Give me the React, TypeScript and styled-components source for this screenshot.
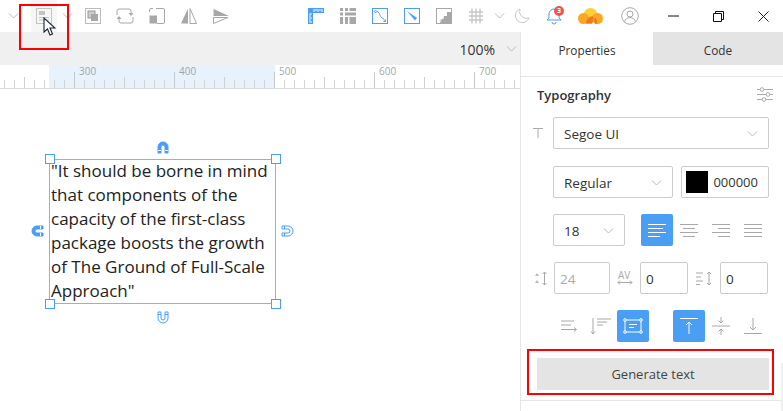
import React from 'react'
import styled, { createGlobalStyle } from 'styled-components'

const GlobalStyle = createGlobalStyle`
  html, body { margin: 0; padding: 0; background: #fff; }
  body { font-family: "Open Sans", "Noto Sans", sans-serif; overflow: hidden; }
`

const BLUE = '#4a9ff5'
const GREY = '#a8a8a8'

const Window = styled.div`
  position: relative;
  width: 783px;
  height: 411px;
  overflow: hidden;
  display: flex;
  flex-direction: column;
`
const TitleBar = styled.div`
  height: 32px;
  display: flex;
  align-items: center;
  flex: none;
`
const Slot = styled.div<{ $w?: number; $ml?: number; $hover?: boolean }>`
  width: ${p => p.$w ?? 32}px;
  margin-left: ${p => p.$ml ?? 0}px;
  height: 32px;
  flex: none;
  display: flex;
  align-items: center;
  justify-content: center;
  position: relative;
  background: ${p => (p.$hover ? '#f6f6f6' : 'transparent')};
  svg { overflow: visible; }
`
const Badge = styled.span`
  position: absolute;
  left: 16px;
  top: 6px;
  width: 10px;
  height: 10px;
  border-radius: 50%;
  background: #ef5350;
  color: #fff;
  font-size: 7px;
  font-weight: 700;
  line-height: 10px;
  text-align: center;
`
const Body = styled.div`
  flex: 1;
  display: flex;
  min-height: 0;
`
const Canvas = styled.div`
  width: 520px;
  flex: none;
  display: flex;
  flex-direction: column;
`
const ZoomBar = styled.div`
  height: 33px;
  flex: none;
  background: #f0f0f0;
  display: flex;
  align-items: center;
  justify-content: flex-end;
  font-size: 14px;
  color: #333;
  gap: 11px;
  padding-right: 4px;
  span { padding-top: 2px; }
`
const Ruler = styled.div`
  position: relative;
  height: 24px;
  flex: none;
  display: flex;
  overflow: hidden;
  box-sizing: border-box;
  border-bottom: 1px solid #dcdcdc;
`
const RulerShade = styled.div`
  position: absolute;
  left: 49px;
  top: 0;
  bottom: 0;
  width: 226px;
  background: #e8f2fc;
`
const RulerSegment = styled.div<{ $first?: boolean }>`
  position: relative;
  width: 100px;
  flex: none;
  margin-left: ${p => (p.$first ? -26 : 0)}px;
  font-size: 10px;
  line-height: 11px;
  color: #a4a4a4;
  padding: 1px 0 0 5px;
  box-sizing: border-box;
  &::before {
    content: '';
    position: absolute;
    left: 0;
    bottom: 0;
    width: 100%;
    height: 16px;
    background:
      linear-gradient(#c8c8c8, #c8c8c8) 0 100% / 1px 16px no-repeat,
      linear-gradient(#d0d0d0, #d0d0d0) 50px 100% / 1px 11px no-repeat,
      repeating-linear-gradient(90deg, #d4d4d4 0 1px, transparent 1px 10px) 0 100% / 100% 8px no-repeat;
  }
`
const Stage = styled.div`
  flex: 1;
  display: flex;
  padding: 70px 0 0 49px;
`
const TextBox = styled.div`
  position: relative;
  width: 227px;
  height: 145px;
  box-sizing: border-box;
  border: 1px solid #7db8f5;
  padding-left: 1px;
  font-size: 17px;
  line-height: 24px;
  color: #222;
  white-space: nowrap;
`
const BoxText = styled.div`
  margin-top: -1px;
`
const Handle = styled.span<{ $x: 'left' | 'right'; $y: 'top' | 'bottom' }>`
  position: absolute;
  ${p => p.$x}: ${p => (p.$x === 'left' ? -5 : -6)}px;
  ${p => p.$y}: -6px;
  width: 8px;
  height: 8px;
  border: 1px solid ${BLUE};
  background: #fff;
`
const Magnet = styled.span<{ $x: number; $y: number }>`
  position: absolute;
  left: ${p => p.$x}px;
  top: ${p => p.$y}px;
  width: 14px;
  height: 14px;
  line-height: 0;
`
const Panel = styled.div`
  flex: 1;
  border-left: 1px solid #e6e6e6;
  display: flex;
  flex-direction: column;
`
const Tabs = styled.div`
  display: flex;
  height: 33px;
  flex: none;
`
const Tab = styled.div<{ $active?: boolean }>`
  width: ${p => (p.$active ? 132 : 130)}px;
  background: ${p => (p.$active ? '#fff' : '#e4e4e4')};
  font-size: 11.8px;
  font-weight: 500;
  color: #333;
  padding-top: 2px;
  box-sizing: border-box;
  display: flex;
  align-items: center;
  justify-content: center;
`
const Section = styled.div`
  margin-top: 11px;
  border-top: 1px solid #e6e6e6;
  border-bottom: 1px solid #e6e6e6;
  padding: 0 14px 0 16px;
  box-sizing: border-box;
  height: 325px;
`
const SectionHead = styled.div`
  height: 40px;
  box-sizing: border-box;
  padding-bottom: 5px;
  margin-right: -4px;
  display: flex;
  align-items: center;
  justify-content: space-between;
  font-size: 13px;
  font-weight: 600;
  color: #333;
`
const Row = styled.div<{ $mb: number; $pl?: number }>`
  display: flex;
  align-items: center;
  margin-bottom: ${p => p.$mb}px;
  padding-left: ${p => p.$pl ?? 16}px;
`
const Field = styled.div<{ $w: number; $ml?: number; $dim?: boolean; $tight?: boolean }>`
  width: ${p => p.$w}px;
  height: 32px;
  margin-left: ${p => p.$ml ?? 0}px;
  flex: none;
  box-sizing: border-box;
  border: 1px solid #ccc;
  border-radius: 2px;
  display: flex;
  align-items: center;
  justify-content: space-between;
  padding: 1px ${p => (p.$tight ? 5 : 10)}px 0;
  font-size: 13.5px;
  color: ${p => (p.$dim ? '#aaa' : '#333')};
`
const Swatch = styled.span`
  width: 22px;
  height: 22px;
  background: #000;
  margin: -1px 5px 0 -6px;
  flex: none;
`
const HexValue = styled.span`
  font-size: 13px;
  margin-top: -2px;
`
const IconSlot = styled.div<{ $on?: boolean; $ml?: number; $w?: number }>`
  width: ${p => p.$w ?? 32}px;
  height: 32px;
  margin-left: ${p => p.$ml ?? 0}px;
  flex: none;
  border-radius: 2px;
  background: ${p => (p.$on ? BLUE : 'transparent')};
  display: flex;
  align-items: center;
  justify-content: center;
  svg { overflow: visible; }
`
const TypeMark = styled.div`
  width: 20px;
  margin-left: -4px;
  flex: none;
  line-height: 0;
`
const GenerateButton = styled.div`
  height: 32px;
  margin-top: 16px;
  width: 232px;
  background: #e4e4e4;
  color: #444;
  font-size: 13px;
  display: flex;
  align-items: center;
  justify-content: center;
`
const RedBox = styled.div<{ $x: number; $y: number; $w: number; $h: number }>`
  position: absolute;
  left: ${p => p.$x}px;
  top: ${p => p.$y}px;
  width: ${p => p.$w}px;
  height: ${p => p.$h}px;
  box-sizing: border-box;
  border: 2px solid #f00;
  pointer-events: none;
`
const Scrollbar = styled.div`
  position: absolute;
  right: 0;
  top: 363px;
  bottom: 0;
  width: 2px;
  background: #f0f0f0;
`
const Cursor = styled.svg`
  position: absolute;
  left: 43px;
  top: 17px;
`

const Chevron = () => (
  <svg width="11" height="6" viewBox="0 0 11 6" fill="none" stroke="#bbb"><path d="M1 .5l4.500 4.500L10 .5" /></svg>
)
const I: React.FC<{ children: React.ReactNode; s?: number }> = ({ children, s = 16 }) => (
  <svg width={s} height={s} viewBox="0 0 16 16" fill="none" stroke={GREY} strokeWidth="1">{children}</svg>
)

const AlignIcon = ({ rows, color = GREY }: { rows: [number, number][]; color?: string }) => (
  <svg width="18" height="13" viewBox="0 0 18 13" fill="none" stroke={color}>
    {rows.map(([a, b], i) => <path key={i} d={`M${a} ${0.5 + i * 4}H${b}`} />)}
  </svg>
)

const MagnetIcon = ({ rotate, filled }: { rotate: number; filled?: boolean }) => (
  <svg width="14" height="14" viewBox="0 0 14 14" style={{ transform: `rotate(${rotate}deg)` }}>
    <path d="M2 13V7a5 5 0 0 1 10 0v6H9V7a2 2 0 0 0-4 0v6z" fill={filled ? BLUE : '#fff'} stroke={BLUE} />
    <path d="M2 10.500h3M9 10.500h3" stroke={filled ? '#fff' : BLUE} />
  </svg>
)

export default function App() {
  return (
    <Window>
      <GlobalStyle />
      <TitleBar>
        <Slot $w={26}><Chevron /></Slot>
        <Slot $w={26} $ml={5} $hover>
          <I>
            <rect x=".5" y=".5" width="15" height="15" stroke="#c4c4c4" />
            <path d="M3 3h6v4H3z" fill="#c4c4c4" stroke="none" />
            <path d="M3 9.500h10M3 12h10" stroke="#c4c4c4" />
          </I>
        </Slot>
        <Slot $w={20}><Chevron /></Slot>
        <Slot>
          <I>
            <rect x=".5" y=".5" width="15" height="15" stroke="#bbb" />
            <rect x="3" y="3" width="7" height="7" fill="#ccc" stroke="#999" />
            <rect x="6" y="6" width="7" height="7" fill={GREY} stroke="none" />
          </I>
        </Slot>
        <Slot>
          <I>
            <path d="M0 7V3a2 2 0 0 1 2-2h10a2 2 0 0 1 2 2v2M16 9v4a2 2 0 0 1-2 2H4a2 2 0 0 1-2-2v-2" />
            <path d="M11.500 5h5L14 8zM-.5 11h5L2 8z" fill={GREY} stroke="none" />
          </I>
        </Slot>
        <Slot>
          <I>
            <path d="M.5 4V2A1.500 1.500 0 0 1 2 .5h2M7 .5h7a1.500 1.500 0 0 1 1.500 1.500v12a1.500 1.500 0 0 1-1.500 1.500H8" />
            <path d="M.5 7.500h7.500v8H.5z" fill={GREY} stroke="none" />
          </I>
        </Slot>
        <Slot>
          <I>
            <path d="M7 .5v15H0z" fill={GREY} stroke="none" />
            <path d="M9 .5l6.500 15H9z" />
          </I>
        </Slot>
        <Slot>
          <I>
            <path d="M.5 1L16 8H.5z" fill={GREY} stroke="none" />
            <path d="M.5 9.500H15L.5 15.500z" />
          </I>
        </Slot>
        <Slot $ml={63}>
          <I>
            <path d="M0 0h16v5H5v11H0z" fill={BLUE} stroke="none" />
            <path d="M6 1v3M8 1v2M10 1v3M12 1v2M14 1v3M1 6h3M1 8h2M1 10h3M1 12h2M1 14h3" stroke="#fff" />
          </I>
        </Slot>
        <Slot>
          <I>
            <path d="M0 0h3v3H0zM5 0h3v3H5zM5 4.500h11v3H5zM0 4.500h3v3H0zM0 9h3v7H0zM5 9h3v7H5zM9.500 9H16v7H9.500zM9.500 0H16v3H9.500z" fill={GREY} stroke="none" />
          </I>
        </Slot>
        <Slot>
          <svg width="16" height="16" viewBox="0 0 16 16" fill="none" stroke={BLUE}>
            <rect x=".5" y=".5" width="15" height="15" />
            <circle cx="3.500" cy="3.500" r="1" />
            <path d="M5 3.500c3 0 2.500 6 5.500 6.500 1 .5 1.500 2 2 2.500M13.500 11.500v2h-2" />
          </svg>
        </Slot>
        <Slot>
          <svg width="16" height="16" viewBox="0 0 16 16" fill="none" stroke={BLUE}>
            <rect x=".5" y=".5" width="15" height="15" />
            <path d="M3 3l10 7-2 2.500z" fill={BLUE} stroke="none" />
          </svg>
        </Slot>
        <Slot>
          <I>
            <rect x=".5" y=".5" width="15" height="15" />
            <path d="M15 4v11H4v-4h4V8h3V4z" fill={GREY} stroke="none" />
            <path d="M4 15V11h4V8z" fill="#ddd" stroke="none" />
          </I>
        </Slot>
        <Slot>
          <I>
            <path d="M1 4h14M1 8h14M1 12h14M4 .5v15M8 .5v15M12 .5v15" stroke="#c8c8c8" strokeWidth="1.400" />
          </I>
        </Slot>
        <Slot $w={10} $ml={-1} style={{ left: 3 }}><Chevron /></Slot>
        <Slot $ml={5}>
          <svg width="16" height="16" viewBox="0 0 16 16" fill="none" stroke="#c8c8c8">
            <path d="M6 1a7 7 0 1 0 9 9A7 7 0 0 1 6 1z" />
          </svg>
        </Slot>
        <Slot>
          <svg width="16" height="18" viewBox="0 0 16 18" fill="none" stroke={BLUE}>
            <path d="M1 13c2-1 2-3 2-6a5 5 0 0 1 10 0c0 3 0 5 2 6zM6 15a2 2 0 0 0 4 0" strokeLinejoin="round" />
          </svg>
          <Badge>3</Badge>
        </Slot>
        <Slot $w={40}>
          <svg width="25" height="16" viewBox="0 0 25 16" style={{ marginTop: -1 }}>
            <circle cx="12.500" cy="7" r="7" fill="#fdd03b" />
            <circle cx="5.500" cy="10.500" r="5.500" fill="#f9a825" />
            <circle cx="19.500" cy="10.500" r="5.500" fill="#f9a825" />
            <path d="M8 15.800c0-5 4-8 7-7.500 1 2.500 0 6-1 7.500z" fill="#ee7a1e" />
            <path d="M17 15.800c-1-2-1-4-.5-6 2 .5 3 3 2.500 6z" fill="#ee7a1e" />
          </svg>
        </Slot>
        <Slot $w={40}>
          <svg width="18" height="18" viewBox="0 0 18 18" fill="none" stroke="#aaa">
            <circle cx="9" cy="9" r="8.300" />
            <circle cx="9" cy="7" r="3" />
            <path d="M3.500 15c.5-3 3-4.500 5.500-4.500s5 1.500 5.500 4.500" />
          </svg>
        </Slot>
        <Slot $w={46}>
          <svg width="11" height="2" viewBox="0 0 11 2"><path d="M0 1h11" stroke="#111" /></svg>
        </Slot>
        <Slot $w={44}>
          <svg width="11" height="11" viewBox="0 0 11 11" fill="none" stroke="#111">
            <path d="M.5 2.500h8v8h-8z" /><path d="M2.500 2.500v-2h8v8h-2" />
          </svg>
        </Slot>
        <Slot $w={46}>
          <svg width="11" height="11" viewBox="0 0 11 11" fill="none" stroke="#222"><path d="M.5.500l10 10M10.500.5l-10 10" /></svg>
        </Slot>
      </TitleBar>
      <Body>
        <Canvas>
          <ZoomBar>
            <span>100%</span>
            <Slot $w={10}><Chevron /></Slot>
          </ZoomBar>
          <Ruler>
            <RulerShade />
            <RulerSegment $first />
            {[300, 400, 500, 600, 700].map(n => <RulerSegment key={n}>{n}</RulerSegment>)}
          </Ruler>
          <Stage>
            <TextBox>
              <BoxText>
                "It should be borne in mind<br />
                that components of the<br />
                capacity of the first-class<br />
                package boosts the growth<br />
                of The Ground of Full-Scale<br />
                Approach"
              </BoxText>
              <Handle $x="left" $y="top" />
              <Handle $x="right" $y="top" />
              <Handle $x="left" $y="bottom" />
              <Handle $x="right" $y="bottom" />
              <Magnet $x={106} $y={-20}><MagnetIcon rotate={0} filled /></Magnet>
              <Magnet $x={106} $y={151}><MagnetIcon rotate={180} /></Magnet>
              <Magnet $x={-20} $y={64}><MagnetIcon rotate={-90} filled /></Magnet>
              <Magnet $x={231} $y={64}><MagnetIcon rotate={90} /></Magnet>
            </TextBox>
          </Stage>
        </Canvas>
        <Panel>
          <Tabs>
            <Tab $active>Properties</Tab>
            <Tab>Code</Tab>
          </Tabs>
          <Section>
            <SectionHead>
              <span>Typography</span>
              <svg width="16" height="15" viewBox="0 0 16 15" fill="none" stroke="#aaa">
                <path d="M0 2.500h16M0 7.500h16M0 12.500h16" />
                <circle cx="5" cy="2.500" r="1.800" fill="#fff" />
                <circle cx="11" cy="7.500" r="1.800" fill="#fff" />
                <circle cx="7" cy="12.500" r="1.800" fill="#fff" />
              </svg>
            </SectionHead>
            <Row $mb={17} $pl={0}>
              <TypeMark>
                <svg width="10" height="10" viewBox="0 0 10 10" fill="none" stroke="#aaa"><path d="M0 .5h10M5 .5V10" /></svg>
              </TypeMark>
              <Field $w={216}>Segoe UI<Chevron /></Field>
            </Row>
            <Row $mb={16}>
              <Field $w={120}>Regular<Chevron /></Field>
              <Field $w={88} $ml={8}><Swatch /><HexValue>000000</HexValue></Field>
            </Row>
            <Row $mb={16}>
              <Field $w={72}>18<Chevron /></Field>
              <IconSlot $on $ml={16}><AlignIcon color="#fff" rows={[[0, 18], [0, 15], [0, 18], [0, 12]]} /></IconSlot>
              <IconSlot><AlignIcon rows={[[0, 18], [3, 15], [0, 18], [3, 15]]} /></IconSlot>
              <IconSlot><AlignIcon rows={[[0, 18], [6, 18], [0, 18], [6, 18]]} /></IconSlot>
              <IconSlot><AlignIcon rows={[[0, 18], [0, 18], [0, 18], [0, 18]]} /></IconSlot>
            </Row>
            <Row $mb={16} $pl={0}>
              <IconSlot $w={17} style={{ marginLeft: -4, marginRight: 4 }}>
                <svg width="13" height="13" viewBox="0 0 13 13" fill="none" stroke={GREY}>
                  <path d="M2 1l2 3H0zM2 8l2 3H0z" fill="#bbb" stroke="none" /><path d="M9.500 0v13M7.500 2l2-2 2 2M7.500 11l2 2 2-2" />
                </svg>
              </IconSlot>
              <Field $w={56} $dim $tight>24</Field>
              <IconSlot $w={30}>
                <svg width="16" height="15" viewBox="0 0 16 15" fill="none" stroke={GREY}>
                  <text x="1" y="7.500" fontSize="10" fill={GREY} stroke="none" fontFamily="Open Sans">AV</text>
                  <path d="M1 11.500h14M3 9.500l-2 2 2 2M13 9.500l2 2-2 2" />
                </svg>
              </IconSlot>
              <Field $w={48} $tight>0</Field>
              <IconSlot $w={32}>
                <svg width="17" height="13" viewBox="0 0 17 13" fill="none" stroke={GREY}>
                  <path d="M0 1h7M0 5h5M0 9h7M0 12.500h4M13 0v13M11 2l2-2 2 2M11 11l2 2 2-2" />
                </svg>
              </IconSlot>
              <Field $w={48} $tight>0</Field>
            </Row>
            <Row $mb={0} $pl={16}>
              <IconSlot>
                <svg width="17" height="12" viewBox="0 0 17 12" fill="none" stroke={GREY}>
                  <path d="M0 1h13M0 5h10M0 9.500h15M13 7.500l2.500 2-2.500 2" />
                </svg>
              </IconSlot>
              <IconSlot>
                <svg width="22" height="18" viewBox="0 0 22 18" fill="none" stroke={GREY}>
                  <path d="M3 1v16M1 14.500l2 2.500 2-2.500M7 2h14M7 5h10M7 8h6" />
                </svg>
              </IconSlot>
              <IconSlot $on>
                <svg width="20" height="16" viewBox="0 0 20 16" fill="none" stroke="#fff">
                  <rect x="2" y="2" width="16" height="12" />
                  <path d="M6 6.500h8M6 9.500h5" />
                  <g fill={BLUE}><circle cx="2" cy="2" r="1.300" /><circle cx="18" cy="2" r="1.300" /><circle cx="2" cy="14" r="1.300" /><circle cx="18" cy="14" r="1.300" /></g>
                </svg>
              </IconSlot>
              <IconSlot $on $ml={24}>
                <svg width="18" height="16" viewBox="0 0 18 16" fill="none" stroke="#fff">
                  <path d="M0 .5h18M9 4v12M6 7l3-3 3 3" />
                </svg>
              </IconSlot>
              <IconSlot>
                <svg width="18" height="18" viewBox="0 0 18 18" fill="none" stroke={GREY}>
                  <path d="M0 9h18M9 0v6M6.500 3.500L9 6l2.500-2.500M9 18v-6M6.500 14.500L9 12l2.500 2.500" />
                </svg>
              </IconSlot>
              <IconSlot>
                <svg width="18" height="16" viewBox="0 0 18 16" fill="none" stroke={GREY}>
                  <path d="M0 15.500h18M9 0v12M6 9l3 3 3-3" />
                </svg>
              </IconSlot>
            </Row>
            <GenerateButton>Generate text</GenerateButton>
          </Section>
        </Panel>
      </Body>
      <Scrollbar />
      <RedBox $x={19} $y={4} $w={50} $h={46} />
      <RedBox $x={527} $y={349} $w={247} $h={46} />
      <Cursor width="13" height="20" viewBox="0 0 13 20">
        <path d="M1 1v14l3.500-3 2.500 6 2.500-1-2.500-6H12z" fill="#fff" stroke="#1a2233" strokeWidth="1.100" />
      </Cursor>
    </Window>
  )
}
